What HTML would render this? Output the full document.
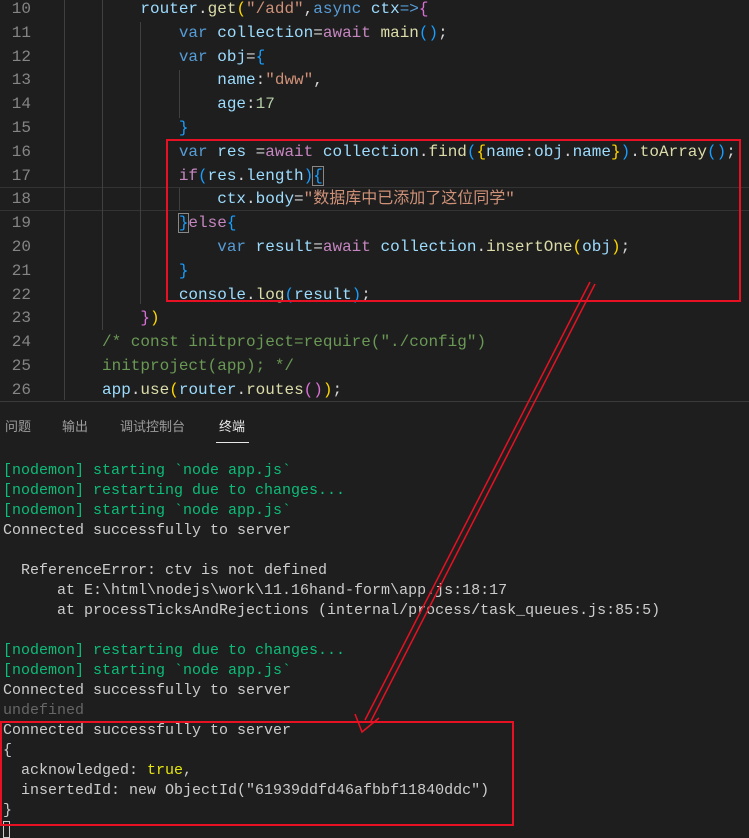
<!DOCTYPE html>
<html><head><meta charset="utf-8"><style>
body{margin:0;width:749px;height:838px;background:#1e1e1e;overflow:hidden;position:relative;font-family:"Liberation Mono","Noto Sans CJK SC",monospace}
.ed{position:absolute;left:0;top:-2px;font-size:16px;line-height:23.8px;white-space:pre;color:#d4d4d4}
.ln{position:absolute;left:0;width:31px;text-align:right;color:#858585}
.cd{position:absolute;left:102px}
.k{color:#569cd6}.v{color:#9cdcfe}.a{color:#c586c0}.s{color:#ce9178}.f{color:#dcdcaa}.n{color:#b5cea8}.c{color:#6a9955}
.y{color:#ffd700}.p{color:#da70d6}.b{color:#179fff}
.term{position:absolute;left:3px;top:461px;font-size:15px;line-height:20px;white-space:pre;color:#cccccc}
.g{color:#0dbc79}.u{color:#666}.t{color:#e5e510}
.tabs{position:absolute;top:416px;font-family:"Liberation Sans","Noto Sans CJK SC",sans-serif;font-size:13px;color:#9d9d9d}
</style></head><body>
<div style="position:absolute;left:0;top:401px;width:749px;height:1px;background:#3a3a3a"></div>
<div style="position:absolute;left:0;top:187px;width:749px;height:1px;background:#333"></div>
<div style="position:absolute;left:0;top:210px;width:749px;height:1px;background:#333"></div>
<div style="position:absolute;left:64px;top:0;width:1px;height:400px;background:#404040"></div>
<div style="position:absolute;left:102px;top:0;width:1px;height:330px;background:#404040"></div>
<div style="position:absolute;left:140px;top:22px;width:1px;height:282px;background:#404040"></div>
<div style="position:absolute;left:179px;top:70px;width:1px;height:48px;background:#404040"></div>
<div style="position:absolute;left:179px;top:188px;width:1px;height:22px;background:#404040"></div>
<div class="ed"><div class="ln">10
11
12
13
14
15
16
17
18
19
20
21
22
23
24
25
26</div><div class="cd">    <span class="v">router</span>.<span class="f">get</span><span class="y">(</span><span class="s">"/add"</span>,<span class="k">async</span> <span class="v">ctx</span><span class="k">=&gt;</span><span class="p">{</span>
        <span class="k">var</span> <span class="v">collection</span>=<span class="a">await</span> <span class="f">main</span><span class="b">()</span>;
        <span class="k">var</span> <span class="v">obj</span>=<span class="b">{</span>
            <span class="v">name</span>:<span class="s">"dww"</span>,
            <span class="v">age</span>:<span class="n">17</span>
        <span class="b">}</span>
        <span class="k">var</span> <span class="v">res</span> =<span class="a">await</span> <span class="v">collection</span>.<span class="f">find</span><span class="b">(</span><span class="y">{</span><span class="v">name</span>:<span class="v">obj</span>.<span class="v">name</span><span class="y">}</span><span class="b">)</span>.<span class="f">toArray</span><span class="b">()</span>;
        <span class="a">if</span><span class="b">(</span><span class="v">res</span>.<span class="v">length</span><span class="b">)</span><span class="b" style="outline:1px solid #888">{</span>
            <span class="v">ctx</span>.<span class="v">body</span>=<span class="s">"数据库中已添加了这位同学"</span>
        <span class="b" style="outline:1px solid #888">}</span><span class="a">else</span><span class="b">{</span>
            <span class="k">var</span> <span class="v">result</span>=<span class="a">await</span> <span class="v">collection</span>.<span class="f">insertOne</span><span class="y">(</span><span class="v">obj</span><span class="y">)</span>;
        <span class="b">}</span>
        <span class="v">console</span>.<span class="f">log</span><span class="b">(</span><span class="v">result</span><span class="b">)</span>;
    <span class="p">}</span><span class="y">)</span>
<span class="c">/* const initproject=require("./config")</span>
<span class="c">initproject(app); */</span>
<span class="v">app</span>.<span class="f">use</span><span class="y">(</span><span class="v">router</span>.<span class="f">routes</span><span class="p">()</span><span class="y">)</span>;</div></div>
<div class="tabs" style="left:5px">问题</div>
<div class="tabs" style="left:62px">输出</div>
<div class="tabs" style="left:120px">调试控制台</div>
<div class="tabs" style="left:219px;color:#e7e7e7">终端</div>
<div style="position:absolute;left:216px;top:442px;width:33px;height:1px;background:#e7e7e7"></div>
<div class="term"><span class="g">[nodemon] starting `node app.js`</span>
<span class="g">[nodemon] restarting due to changes...</span>
<span class="g">[nodemon] starting `node app.js`</span>
Connected successfully to server

  ReferenceError: ctv is not defined
      at E:\html\nodejs\work\11.16hand-form\app.js:18:17
      at processTicksAndRejections (internal/process/task_queues.js:85:5)

<span class="g">[nodemon] restarting due to changes...</span>
<span class="g">[nodemon] starting `node app.js`</span>
Connected successfully to server
<span class="u">undefined</span>
Connected successfully to server
{
  acknowledged: <span class="t">true</span>,
  insertedId: new ObjectId("61939ddfd46afbbf11840ddc")
}</div>
<div style="position:absolute;left:3px;top:821px;width:7px;height:17px;border:1px solid #ccc;box-sizing:border-box"></div>
<div style="position:absolute;left:166px;top:139px;width:575px;height:163px;border:2px solid #e81123;box-sizing:border-box"></div>
<div style="position:absolute;left:0;top:721px;width:514px;height:105px;border:2px solid #e81123;box-sizing:border-box"></div>
<svg style="position:absolute;left:0;top:0" width="749" height="838"><g stroke="#e81123" stroke-width="1.5" fill="none"><line x1="590" y1="282" x2="365" y2="720"/><line x1="595" y1="284" x2="370" y2="723"/><polyline points="355,714 362,732 379,718"/></g></svg>
</body></html>
